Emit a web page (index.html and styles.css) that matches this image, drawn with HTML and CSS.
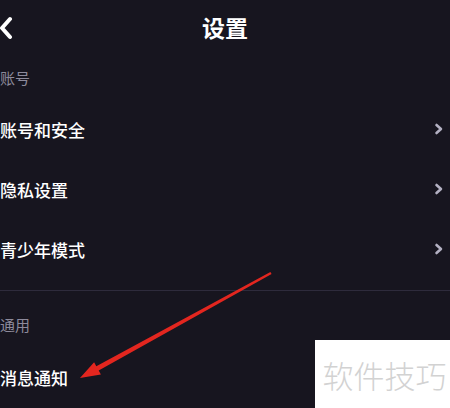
FILE: index.html
```html
<!DOCTYPE html>
<html lang="zh-CN">
<head>
<meta charset="utf-8">
<link rel="stylesheet" href="styles.css">
</head>
<body>
<div class="page">
  <header class="topbar">
    <svg class="back" width="14" height="24" viewBox="0 0 14 24"><path d="M11 3 L3 12 L11 21" fill="none" stroke="#fff" stroke-width="4" stroke-linecap="round" stroke-linejoin="round"/></svg>
    <h1 class="title">设置</h1>
  </header>
  <section class="group">
    <div class="group-label">账号</div>
    <div class="row"><span class="row-text">账号和安全</span><svg class="chev" width="10" height="12" viewBox="0 0 10 12"><path d="M2.5 2 L7 6 L2.5 10" fill="none" stroke="#b3b0c2" stroke-width="2.6" stroke-linecap="round" stroke-linejoin="round"/></svg></div>
    <div class="row"><span class="row-text">隐私设置</span><svg class="chev" width="10" height="12" viewBox="0 0 10 12"><path d="M2.5 2 L7 6 L2.5 10" fill="none" stroke="#b3b0c2" stroke-width="2.6" stroke-linecap="round" stroke-linejoin="round"/></svg></div>
    <div class="row"><span class="row-text">青少年模式</span><svg class="chev" width="10" height="12" viewBox="0 0 10 12"><path d="M2.5 2 L7 6 L2.5 10" fill="none" stroke="#b3b0c2" stroke-width="2.6" stroke-linecap="round" stroke-linejoin="round"/></svg></div>
  </section>
  <div class="divider"></div>
  <section class="group group-2">
    <div class="group-label">通用</div>
    <div class="row row-last"><span class="row-text">消息通知</span></div>
  </section>
  <svg class="arrow" width="450" height="408" viewBox="0 0 450 408">
    <polygon points="80,378 94.1,362.3 96.3,366.2 270.4,272.1 271.6,273.9 98.7,370.6 100.9,374.5" fill="#e3261f"/>
  </svg>
  <div class="watermark">软件技巧</div>
</div>
</body>
</html>
```
FILE: styles.css
```css
html, body {
  margin: 0;
  padding: 0;
  background: #17151f;
}
.page {
  position: relative;
  width: 450px;
  height: 408px;
  overflow: hidden;
  font-family: "Noto Sans CJK SC", "Noto Sans", sans-serif;
  color: #ffffff;
}
.topbar {
  height: 55px;
  display: flex;
  align-items: center;
  justify-content: center;
  position: relative;
}
.back {
  position: absolute;
  left: -1px;
  top: 16px;
}
.title {
  margin: 0;
  font-size: 23px;
  font-weight: 700;
  line-height: 1;
}
.group {
  display: flex;
  flex-direction: column;
}
.group-label {
  height: 44px;
  display: flex;
  align-items: center;
  font-size: 15px;
  color: #8d8a9b;
}
.row {
  height: 60px;
  display: flex;
  align-items: center;
  justify-content: space-between;
}
.row-text {
  font-size: 17px;
  font-weight: 500;
}
.chev {
  margin-right: 6px;
}
.divider {
  height: 1px;
  background: #2e2b3c;
  margin-top: 11px;
}
.group-2 .group-label {
  height: 66px;
}
.row-last {
  height: 40px;
}
.arrow {
  position: absolute;
  left: 0;
  top: 0;
}
.watermark {
  position: absolute;
  left: 315px;
  top: 340px;
  width: 135px;
  height: 68px;
  background: #ffffff;
  color: #d2d2d2;
  font-size: 31px;
  font-weight: 300;
  display: flex;
  align-items: center;
  justify-content: center;
  padding-left: 4px;
  box-sizing: border-box;
}
```
